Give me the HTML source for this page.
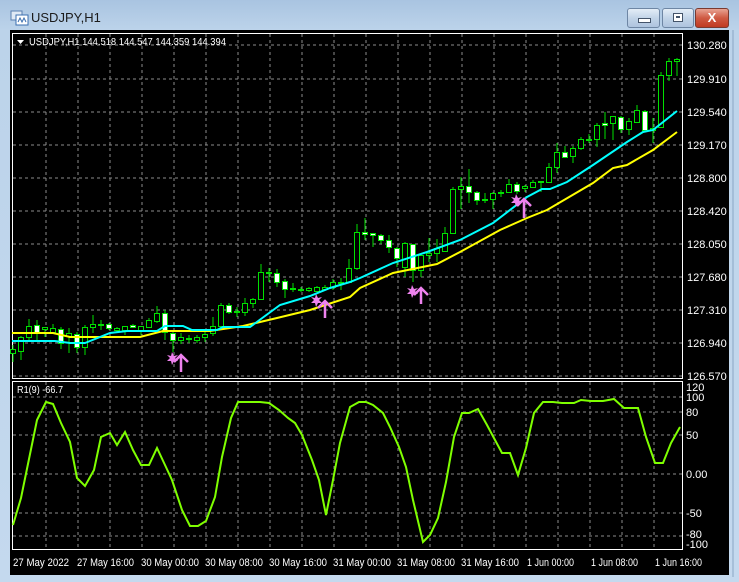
<!DOCTYPE html>
<html><head><meta charset="utf-8"><style>
html,body{margin:0;padding:0;width:739px;height:582px;overflow:hidden;background:#bfd4eb;font-family:"Liberation Sans",sans-serif}
.win{position:absolute;left:0;top:0;width:739px;height:582px;background:linear-gradient(#a9c4e1,#bcd3ea 30px,#c4d9ee);}
.title{position:absolute;left:31px;top:10px;font-size:13px;color:#1b1b1b}
.btn{position:absolute;top:8px;height:18px;border:1px solid #6e86a4;border-radius:3px;background:linear-gradient(#e4edf7,#c2d4e8 50%,#aec4de)}
.cl{background:linear-gradient(#e8a393,#cf5a43 50%,#c03a22);border-color:#7a3a30}
svg{position:absolute;left:0;top:0}
</style></head><body><div class="win">
<svg width="20" height="16" style="left:10px;top:10px" viewBox="0 0 20 16"><rect x="1" y="1" width="11" height="9" fill="#dfe9f5" stroke="#5a7fb0"/><rect x="6" y="5" width="12" height="10" fill="#fff" stroke="#3b6fb0"/><path d="M8 12l2-4 2 4 2-4 2 4" stroke="#3b6fb0" fill="none"/></svg>
<div class="title">USDJPY,H1</div>
<div class="btn" style="left:627px;width:31px"><div style="position:absolute;left:10px;top:9px;width:11px;height:3px;background:#fff;border:1px solid #44546a"></div></div>
<div class="btn" style="left:662px;width:30px"><div style="position:absolute;left:10px;top:4px;width:8px;height:7px;border:1px solid #44546a;background:#fff"><div style="margin:2px;height:2px;background:#44546a"></div></div></div>
<div class="btn cl" style="left:695px;width:32px"><div style="position:absolute;left:0;top:0;width:32px;text-align:center;color:#fff;font-weight:bold;font-size:13px;line-height:18px">X</div></div>
<svg width="739" height="582" font-family="Liberation Sans, sans-serif" font-size="11">
<rect x="10" y="30" width="719" height="545" fill="#000"/>
<line x1="733" y1="30" x2="733" y2="577" stroke="#8aa6c4"/>
<g stroke="#8c8c8c" stroke-dasharray="3,3" fill="none">
<path d="M46 34V378M78 34V378M110 34V378M142 34V378M174 34V378M206 34V378M238 34V378M270 34V378M302 34V378M334 34V378M366 34V378M398 34V378M430 34V378M462 34V378M494 34V378M526 34V378M558 34V378M590 34V378M622 34V378M654 34V378"/>
<path d="M46 382V549M78 382V549M110 382V549M142 382V549M174 382V549M206 382V549M238 382V549M270 382V549M302 382V549M334 382V549M366 382V549M398 382V549M430 382V549M462 382V549M494 382V549M526 382V549M558 382V549M590 382V549M622 382V549M654 382V549"/>
<path d="M13 45H682M13 79H682M13 112H682M13 145H682M13 178H682M13 211H682M13 244H682M13 277H682M13 310H682M13 343H682M13 376H682"/>
<path d="M13 397H682M13 412H682M13 435H682M13 474H682M13 513H682M13 536H682"/>
</g>
<rect x="12.5" y="33.5" width="670" height="345" fill="none" stroke="#fff"/>
<rect x="12.5" y="381.5" width="670" height="168" fill="none" stroke="#fff"/>
<g fill="#fff" lengthAdjust="spacingAndGlyphs">
<text x="687" y="49">130.280</text><text x="687" y="83">129.910</text><text x="687" y="116">129.540</text><text x="687" y="149">129.170</text><text x="687" y="182">128.800</text><text x="687" y="215">128.420</text><text x="687" y="248">128.050</text><text x="687" y="281">127.680</text><text x="687" y="314">127.310</text><text x="687" y="347">126.940</text><text x="687" y="380">126.570</text>
<text x="686" y="391">120</text><text x="686" y="401">100</text><text x="686" y="416">80</text><text x="686" y="439">50</text><text x="686" y="478">0.00</text><text x="686" y="517">-50</text><text x="686" y="538">-80</text><text x="686" y="548">-100</text>
<text x="13" y="566" textLength="56" lengthAdjust="spacingAndGlyphs">27 May 2022</text><text x="77" y="566" textLength="57" lengthAdjust="spacingAndGlyphs">27 May 16:00</text><text x="141" y="566" textLength="58" lengthAdjust="spacingAndGlyphs">30 May 00:00</text><text x="205" y="566" textLength="58" lengthAdjust="spacingAndGlyphs">30 May 08:00</text><text x="269" y="566" textLength="58" lengthAdjust="spacingAndGlyphs">30 May 16:00</text><text x="333" y="566" textLength="58" lengthAdjust="spacingAndGlyphs">31 May 00:00</text><text x="397" y="566" textLength="58" lengthAdjust="spacingAndGlyphs">31 May 08:00</text><text x="461" y="566" textLength="58" lengthAdjust="spacingAndGlyphs">31 May 16:00</text><text x="527" y="566" textLength="47" lengthAdjust="spacingAndGlyphs">1 Jun 00:00</text><text x="591" y="566" textLength="47" lengthAdjust="spacingAndGlyphs">1 Jun 08:00</text><text x="655" y="566" textLength="47" lengthAdjust="spacingAndGlyphs">1 Jun 16:00</text>
<text x="29" y="45" font-size="10.5" textLength="197" lengthAdjust="spacingAndGlyphs">USDJPY,H1  144.518 144.547 144.359 144.394</text>
<text x="17" y="393" font-size="10.5" textLength="46" lengthAdjust="spacingAndGlyphs">R1(9) -66.7</text>
</g>
<path d="M17 40h7l-3.5 4z" fill="#fff"/>
<g stroke="#00e000" stroke-width="1">
<path d="M13 345V362M21 336V360M29 319V342M37 320V342M45 327V337M53 324V333M61 327V349M69 328V353M77 332V353M85 325V355M93 315V333M101 320V330M109 323V330M117 327V332M125 326V335M133 324V328M141 326V335M149 318V328M157 306V323M165 310V340M173 332V352M181 333V344M189 335V343M197 335V343M205 332V342M213 317V336M221 303V328M229 303V314M237 307V317M245 298V316M253 298V308M261 264V300M269 268V282M277 269V287M285 279V298M293 283V292M301 287V292M309 287V292M317 286V292M325 285V291M333 279V290M341 278V290M349 259V283M357 224V270M365 218V240M373 233V247M381 234V244M389 235V253M397 247V267M405 242V277M413 244V282M421 253V277M429 238V262M437 239V262M445 227V252M453 187V233M461 177V209M469 169V203M477 191V205M485 193V203M493 192V209M501 190V197M509 179V193M517 182V194M525 185V192M533 180V188M541 181V192M549 163V183M557 143V173M565 146V158M573 146V163M581 137V150M589 134V143M597 123V147M605 112V139M613 116V140M621 116V133M629 118V135M637 105V123M645 110V131M653 118V143M661 72V127M669 58V81M677 58V76"/>
<g fill="#000">
<rect x="10.5" y="349.5" width="5" height="4"/><rect x="18.5" y="337.5" width="5" height="14"/><rect x="26.5" y="326.5" width="5" height="11"/><rect x="42.5" y="327.5" width="5" height="2"/><rect x="50.5" y="328.5" width="5" height="4"/><rect x="66.5" y="333.5" width="5" height="3"/><rect x="82.5" y="327.5" width="5" height="20"/><rect x="90.5" y="324.5" width="5" height="3"/><rect x="98.5" y="324.5" width="5" height="1"/><rect x="114.5" y="328.5" width="5" height="2"/><rect x="122.5" y="326.5" width="5" height="4"/><rect x="138.5" y="326.5" width="5" height="5"/><rect x="146.5" y="320.5" width="5" height="7"/><rect x="154.5" y="313.5" width="5" height="8"/><rect x="178.5" y="337.5" width="5" height="3"/><rect x="194.5" y="337.5" width="5" height="3"/><rect x="202.5" y="334.5" width="5" height="3"/><rect x="210.5" y="326.5" width="5" height="7"/><rect x="218.5" y="305.5" width="5" height="21"/><rect x="234.5" y="311.5" width="5" height="1"/><rect x="242.5" y="303.5" width="5" height="9"/><rect x="250.5" y="299.5" width="5" height="4"/><rect x="258.5" y="272.5" width="5" height="27"/><rect x="266.5" y="272.5" width="5" height="1"/><rect x="290.5" y="288.5" width="5" height="1"/><rect x="298.5" y="289.5" width="5" height="1"/><rect x="306.5" y="288.5" width="5" height="2"/><rect x="314.5" y="287.5" width="5" height="4"/><rect x="322.5" y="287.5" width="5" height="2"/><rect x="330.5" y="282.5" width="5" height="5"/><rect x="338.5" y="282.5" width="5" height="1"/><rect x="346.5" y="268.5" width="5" height="14"/><rect x="354.5" y="232.5" width="5" height="36"/><rect x="402.5" y="243.5" width="5" height="24"/><rect x="418.5" y="255.5" width="5" height="15"/><rect x="426.5" y="253.5" width="5" height="2"/><rect x="434.5" y="248.5" width="5" height="5"/><rect x="442.5" y="233.5" width="5" height="18"/><rect x="450.5" y="189.5" width="5" height="44"/><rect x="458.5" y="186.5" width="5" height="3"/><rect x="482.5" y="199.5" width="5" height="1"/><rect x="490.5" y="193.5" width="5" height="6"/><rect x="498.5" y="192.5" width="5" height="1"/><rect x="506.5" y="184.5" width="5" height="8"/><rect x="522.5" y="186.5" width="5" height="2"/><rect x="530.5" y="182.5" width="5" height="5"/><rect x="538.5" y="181.5" width="5" height="1"/><rect x="546.5" y="167.5" width="5" height="15"/><rect x="554.5" y="152.5" width="5" height="15"/><rect x="570.5" y="148.5" width="5" height="8"/><rect x="578.5" y="139.5" width="5" height="9"/><rect x="586.5" y="139.5" width="5" height="1"/><rect x="594.5" y="125.5" width="5" height="14"/><rect x="610.5" y="116.5" width="5" height="7"/><rect x="626.5" y="121.5" width="5" height="8"/><rect x="634.5" y="110.5" width="5" height="12"/><rect x="650.5" y="128.5" width="5" height="2"/><rect x="658.5" y="75.5" width="5" height="52"/><rect x="666.5" y="61.5" width="5" height="14"/><rect x="674.5" y="59.5" width="5" height="2"/>
</g>
<g fill="#fff">
<rect x="34.5" y="325.5" width="5" height="8"/><rect x="58.5" y="329.5" width="5" height="14"/><rect x="74.5" y="334.5" width="5" height="13"/><rect x="106.5" y="324.5" width="5" height="4"/><rect x="130.5" y="325.5" width="5" height="2"/><rect x="162.5" y="313.5" width="5" height="19"/><rect x="170.5" y="333.5" width="5" height="7"/><rect x="186.5" y="338.5" width="5" height="1"/><rect x="226.5" y="305.5" width="5" height="7"/><rect x="274.5" y="273.5" width="5" height="9"/><rect x="282.5" y="281.5" width="5" height="8"/><rect x="362.5" y="232.5" width="5" height="2"/><rect x="370.5" y="233.5" width="5" height="2"/><rect x="378.5" y="235.5" width="5" height="5"/><rect x="386.5" y="240.5" width="5" height="7"/><rect x="394.5" y="248.5" width="5" height="10"/><rect x="410.5" y="244.5" width="5" height="26"/><rect x="466.5" y="186.5" width="5" height="6"/><rect x="474.5" y="192.5" width="5" height="8"/><rect x="514.5" y="184.5" width="5" height="7"/><rect x="562.5" y="152.5" width="5" height="5"/><rect x="602.5" y="123.5" width="5" height="2"/><rect x="618.5" y="117.5" width="5" height="12"/><rect x="642.5" y="111.5" width="5" height="19"/>
</g></g>
<polyline fill="none" stroke="#ffff00" stroke-width="2" points="12,333 53,333 70,337 140,337 163,331 210,331 243,326 277,318 310,310 350,297 360,288 393,273 437,264 460,252 500,230 527,218 547,210 593,183 613,168 627,165 653,150 677,132"/>
<polyline fill="none" stroke="#00ffff" stroke-width="2" points="12,341 55,341 70,343 85,343 110,333 127,331 157,331 165,326 183,326 192,330 217,330 223,327 250,327 280,305 310,296 330,288 350,282 360,278 393,263 427,252 460,240 493,223 527,197 542,189 550,189 567,182 593,165 627,142 643,132 653,130 677,111"/>
<g fill="#ee82ee" stroke="#ee82ee">
<path d="M172 352l2 4 4-1-3 3 3 3-4 0-2 4-1-4-4 0 3-3-3-3 4 1z" stroke="none"/>
<path d="M181 372V356M174 362l7-7 7 7" fill="none" stroke-width="2.5"/>
<path d="M316 294l2 4 4-1-3 3 3 3-4 0-2 4-1-4-4 0 3-3-3-3 4 1z" stroke="none"/>
<path d="M325 318V301M318 308l7-7 7 7" fill="none" stroke-width="2.5"/>
<path d="M412 285l2 4 4-1-3 3 3 3-4 0-2 4-1-4-4 0 3-3-3-3 4 1z" stroke="none"/>
<path d="M421 304V288M414 295l7-7 7 7" fill="none" stroke-width="2.5"/>
<path d="M516 194l2 4 4-1-3 3 3 3-4 0-2 4-1-4-4 0 3-3-3-3 4 1z" stroke="none"/>
<path d="M524 218V199M517 206l7-7 7 7" fill="none" stroke-width="2.5"/>
</g>
<polyline fill="none" stroke="#7fff00" stroke-width="2" points="13,525 21,498 37,420 46,402 53,404 61,423 70,442 77,478 85,486 94,470 101,437 110,433 117,445 125,432 133,450 141,465 149,465 157,448 165,465 172,480 182,510 190,526 198,526 206,521 215,497 222,457 231,418 238,402 260,402 269,403 279,410 288,418 295,423 302,435 312,460 319,480 326,515 333,480 340,443 350,407 359,402 366,402 373,405 383,413 390,427 399,447 406,467 413,500 423,542 430,535 438,518 446,482 454,437 462,413 469,413 478,409 487,425 495,440 502,453 510,453 518,475 526,448 534,413 543,402 553,402 562,403 574,403 581,400 591,401 603,401 614,399 624,408 638,408 646,437 655,463 663,463 671,443 680,427"/>
</svg>
</div></body></html>
